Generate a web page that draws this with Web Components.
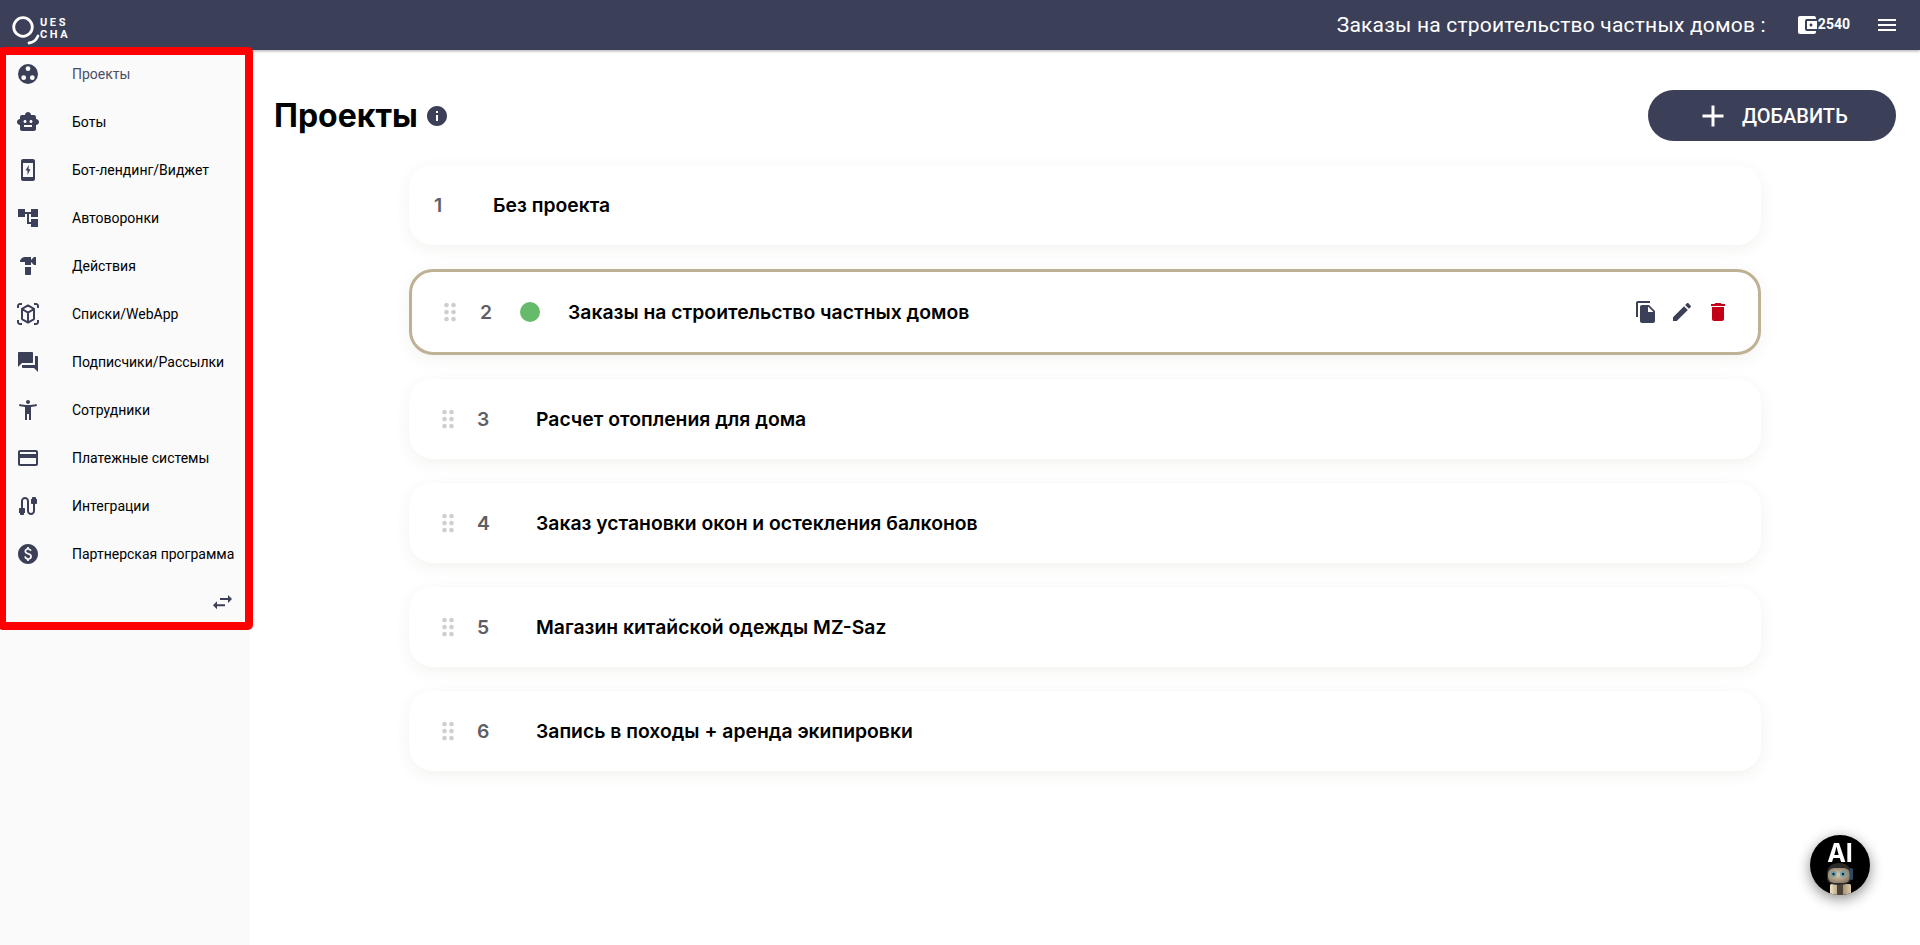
<!DOCTYPE html>
<html lang="ru">
<head>
<meta charset="utf-8">
<title>Проекты</title>
<style>
  html, body { margin: 0; height: 100%; background: #fff; overflow: hidden; }
  body { font-family: "Roboto", "Liberation Sans", sans-serif; color: #000; }
  .layout { display: flex; height: 895px; }
</style>
</head>
<body>
<app-header title="Заказы на строительство частных домов :" balance="2540"></app-header>
<div class="layout">
  <side-nav>
    <nav-item icon="projects" active>Проекты</nav-item>
    <nav-item icon="bot">Боты</nav-item>
    <nav-item icon="phone">Бот-лендинг/Виджет</nav-item>
    <nav-item icon="tree">Автоворонки</nav-item>
    <nav-item icon="hammer">Действия</nav-item>
    <nav-item icon="cube">Списки/WebApp</nav-item>
    <nav-item icon="forum">Подписчики/Рассылки</nav-item>
    <nav-item icon="person">Сотрудники</nav-item>
    <nav-item icon="card">Платежные системы</nav-item>
    <nav-item icon="cable">Интеграции</nav-item>
    <nav-item icon="paid">Партнерская программа</nav-item>
  </side-nav>
  <projects-page>
    <project-card num="1" fixed>Без проекта</project-card>
    <project-card num="2" active>Заказы на строительство частных домов</project-card>
    <project-card num="3">Расчет отопления для дома</project-card>
    <project-card num="4">Заказ установки окон и остекления балконов</project-card>
    <project-card num="5">Магазин китайской одежды MZ-Saz</project-card>
    <project-card num="6">Запись в походы + аренда экипировки</project-card>
  </projects-page>
</div>
<ai-fab></ai-fab>

<script>
const ICONS = {
  projects: '<path fill-rule="evenodd" d="M12 2a10 10 0 1 0 0 20 10 10 0 0 0 0-20zm0 2.300a2.400 2.400 0 1 1 0 4.800 2.400 2.400 0 0 1 0-4.800zM7.700 13.300a2.400 2.400 0 1 1 0 4.800 2.400 2.400 0 0 1 0-4.800zm8.600 0a2.400 2.400 0 1 1 0 4.800 2.400 2.400 0 0 1 0-4.800z"/>',
  bot: '<path d="M20 9V7c0-1.1-.9-2-2-2h-3c0-1.66-1.34-3-3-3S9 3.34 9 5H6c-1.1 0-2 .9-2 2v2c-1.66 0-3 1.34-3 3s1.34 3 3 3v4c0 1.1.9 2 2 2h12c1.1 0 2-.9 2-2v-4c1.66 0 3-1.34 3-3s-1.34-3-3-3zM7.5 11.5c0-.83.67-1.5 1.5-1.5s1.5.67 1.5 1.5S9.83 13 9 13s-1.5-.67-1.5-1.5zM16 17H8v-2h8v2zm-1-4c-.83 0-1.5-.67-1.5-1.5S14.17 10 15 10s1.5.67 1.5 1.5S15.83 13 15 13z"/>',
  phone: '<path d="M17 1.01L7 1c-1.1 0-2 .9-2 2v18c0 1.1.9 2 2 2h10c1.1 0 2-.9 2-2V3c0-1.1-.9-1.99-2-1.99zM17 19H7V5h10v14z"/><path d="M12.8 7 9.5 12.6h2v4.4l3-5.8h-1.9z"/>',
  tree: '<path d="M22 11V3h-7v3H9V3H2v8h7V8h2v10h4v3h7v-8h-7v3h-2V8h2v3z"/>',
  hammer: '<path d="M18 3l-3 3V3H9C6.24 3 4 5.24 4 8h5v3h6V8l3 3h2V3h-2zM9 13v7c0 .55.45 1 1 1h4c.55 0 1-.45 1-1v-7H9z"/>',
  cube: '<path d="M3 4c0-.55.45-1 1-1h2V1H4C2.35 1 1 2.35 1 4v2h2V4zm0 16v-2H1v2c0 1.65 1.35 3 3 3h2v-2H4c-.55 0-1-.45-1-1zM20 1h-2v2h2c.55 0 1 .45 1 1v2h2V4c0-1.65-1.35-3-3-3zm1 19c0 .55-.45 1-1 1h-2v2h2c1.65 0 3-1.35 3-3v-2h-2v2z"/><path fill="none" stroke="currentColor" stroke-width="2" stroke-linejoin="round" d="M12 3.400l6 3.500v10.200l-6 3.500-6-3.500V6.900zM6 7l6 3.600L18 7M12 10.600V20.600"/>',
  forum: '<path d="M21 6h-2v9H6v2c0 .55.45 1 1 1h11l4 4V7c0-.55-.45-1-1-1zm-4 6V3c0-.55-.45-1-1-1H3c-.55 0-1 .45-1 1v14l4-4h10c.55 0 1-.45 1-1z"/>',
  person: '<path d="M20.5 6c-2.61.7-5.67 1-8.5 1s-5.89-.3-8.5-1L3 8c1.86.5 4 .83 6 1v13h2v-6h2v6h2V9c2-.17 4.14-.5 6-1l-.5-2zM12 6c1.1 0 2-.9 2-2s-.9-2-2-2-2 .9-2 2 .9 2 2 2z"/>',
  card: '<path d="M20 4H4c-1.11 0-1.99.89-1.99 2L2 18c0 1.11.89 2 2 2h16c1.11 0 2-.89 2-2V6c0-1.11-.89-2-2-2zm0 14H4v-6h16v6zm0-10H4V6h16v2z"/>',
  cable: '<path d="M20 5V4c0-.55-.45-1-1-1h-2c-.55 0-1 .45-1 1v1h-1v4c0 .55.45 1 1 1h1v7c0 1.1-.9 2-2 2s-2-.9-2-2V7c0-2.21-1.79-4-4-4S5 4.79 5 7v7H4c-.55 0-1 .45-1 1v4h1v1c0 .55.45 1 1 1h2c.55 0 1-.45 1-1v-1h1v-4c0-.55-.45-1-1-1H7V7c0-1.1.9-2 2-2s2 .9 2 2v10c0 2.21 1.79 4 4 4s4-1.79 4-4v-7h1c.55 0 1-.45 1-1V5h-1z"/>',
  paid: '<path d="M12 2C6.48 2 2 6.48 2 12s4.48 10 10 10 10-4.48 10-10S17.52 2 12 2zm.88 15.760V19h-1.750v-1.290c-.74-.18-2.390-.77-3.020-2.960l1.650-.67c.06.22.58 2.090 2.400 2.090.93 0 1.980-.48 1.980-1.610 0-.96-.7-1.460-2.280-2.030-1.100-.39-3.350-1.030-3.350-3.310 0-.1.01-2.400 2.620-2.960V5h1.750v1.240c1.840.32 2.510 1.790 2.660 2.230l-1.580.67c-.11-.35-.59-1.340-1.900-1.340-.7 0-1.810.37-1.810 1.390 0 .95.86 1.310 2.640 1.900 2.400.83 3.010 2.050 3.010 3.450 0 2.630-2.500 3.130-3.020 3.220z"/>',
  swap: '<path d="M10 8h8V5l4 4-4 4v-3h-8zM15 14.250H7v-3l-4 4 4 4v-3h8z"/>',
  copy: '<path d="M16 1H4c-1.100 0-2 .9-2 2v14h2V3h12V1zm-1 4l6 6v10c0 1.100-.9 2-2 2H7.990C6.890 23 6 22.100 6 21l.01-14c0-1.100.89-2 1.990-2h7zm-1 7h5.500L14 6.500V12z"/>',
  edit: '<path d="M3 17.250V21h3.750L17.810 9.940l-3.750-3.750L3 17.250zM20.710 7.040c.39-.39.39-1.020 0-1.410l-2.340-2.340c-.39-.39-1.020-.39-1.410 0l-1.830 1.830 3.750 3.750 1.830-1.830z"/>',
  trash: '<path d="M6 19c0 1.100.9 2 2 2h8c1.100 0 2-.9 2-2V7H6v12zM19 4h-3.500l-1-1h-5l-1 1H5v2h14V4z"/>',
  info: '<path d="M12 2C6.480 2 2 6.480 2 12s4.480 10 10 10 10-4.480 10-10S17.520 2 12 2zm1 15h-2v-6h2v6zm0-8h-2V7h2v2z"/>',
  wallet: '<path d="M21 18v1c0 1.100-.9 2-2 2H5c-1.110 0-2-.9-2-2V5c0-1.100.89-2 2-2h14c1.100 0 2 .9 2 2v1h-9c-1.110 0-2 .9-2 2v8c0 1.100.89 2 2 2h9zm-9-2h10V8H12v8zm4-2.500c-.83 0-1.500-.67-1.500-1.500s.67-1.500 1.500-1.500 1.500.67 1.500 1.500-.67 1.500-1.500 1.500z"/>',
  menu: '<path d="M3 18h18v-2H3v2zm0-5h18v-2H3v2zm0-7v2h18V6H3z"/>',
  plus: '<path d="M19 13h-6v6h-2v-6H5v-2h6V5h2v6h6v2z"/>',
  drag: '<path d="M11 18c0 1.100-.9 2-2 2s-2-.9-2-2 .9-2 2-2 2 .9 2 2zm-2-8c-1.100 0-2 .9-2 2s.9 2 2 2 2-.9 2-2-.9-2-2-2zm0-6c-1.100 0-2 .9-2 2s.9 2 2 2 2-.9 2-2-.9-2-2-2zm6 4c1.100 0 2-.9 2-2s-.9-2-2-2-2 .9-2 2 .9 2 2 2zm0 2c-1.100 0-2 .9-2 2s.9 2 2 2 2-.9 2-2-.9-2-2-2zm0 6c-1.100 0-2 .9-2 2s.9 2 2 2 2-.9 2-2-.9-2-2-2z"/>'
};

class AppIcon extends HTMLElement {
  connectedCallback() {
    const size = this.getAttribute('size') || 24;
    const name = this.getAttribute('name');
    this.attachShadow({ mode: 'open' });
    this.shadowRoot.innerHTML = `
      <style>
        :host { display: inline-flex; flex: none; width: ${size}px; height: ${size}px; color: var(--icon-color, #3c3f58); }
        svg { width: 100%; height: 100%; fill: currentColor; display: block; }
      </style>
      <svg viewBox="0 0 24 24">${ICONS[name] || ''}</svg>`;
  }
}
customElements.define('app-icon', AppIcon);

class AppHeader extends HTMLElement {
  connectedCallback() {
    this.attachShadow({ mode: 'open' });
    this.shadowRoot.innerHTML = `
      <style>
        :host { display: flex; align-items: center; height: 50px; background: #3c3f58; color: #fff;
                position: relative; z-index: 2; box-shadow: 0 1px 3px rgba(0,0,0,.35); --icon-color: #fff; }
        .logo { display: flex; align-items: flex-start; margin-left: 12px; height: 40px; padding-top: 10px; box-sizing: border-box; }
        .logo svg { width: 28px; height: 30px; display: block; flex: none; overflow: visible; }
        .word { font: 700 11px/11.500px "Roboto", sans-serif; letter-spacing: 2.600px; margin: 2px 0 0 0; }
        .title { margin-left: auto; font-size: 21px; letter-spacing: .2px; margin-right: 29px; padding-bottom: 1px; }
        .balance { display: flex; align-items: center; font: 700 14px "Roboto", sans-serif; margin-right: 25px; }
        .balance span { margin-left: -1px; margin-top: -2px; }
        .menu { margin-right: 21px; }
      </style>
      <div class="logo">
        <svg viewBox="0 0 28 30" fill="none" stroke="#fff" stroke-linecap="round">
          <circle cx="11" cy="12" r="9.300" stroke-width="2.800"/>
          <path d="M17 28c3.500-.3 7-2.500 9-7" stroke-width="2.800"/>
        </svg>
        <div class="word">UES<br>CHA</div>
      </div>
      <div class="title">${this.getAttribute('title')}</div>
      <div class="balance"><app-icon name="wallet"></app-icon><span>${this.getAttribute('balance')}</span></div>
      <app-icon class="menu" name="menu"></app-icon>`;
  }
}
customElements.define('app-header', AppHeader);

class SideNav extends HTMLElement {
  constructor() {
    super();
    this.attachShadow({ mode: 'open' });
    this.shadowRoot.innerHTML = `
      <style>
        :host { display: flex; flex-direction: column; flex: none; width: 250px; background: #fafafa; position: relative; }
        .toggle { display: flex; justify-content: flex-end; padding: 12px 16px 0 0; }
        /* red annotation frame lying over the menu */
        .frame { position: absolute; left: -2px; top: -3px; width: 255px; height: 583px; box-sizing: border-box;
                 border: 8px solid #fe0000; border-radius: 5px; pointer-events: none; z-index: 3; }
      </style>
      <slot></slot>
      <div class="toggle"><app-icon name="swap"></app-icon></div>
      <div class="frame"></div>`;
  }
}
customElements.define('side-nav', SideNav);

class NavItem extends HTMLElement {
  constructor() {
    super();
    this.attachShadow({ mode: 'open' });
    this.shadowRoot.innerHTML = `
      <style>
        :host { display: flex; align-items: center; height: 48px; padding-left: 16px; font-size: 14px; color: #000; }
        :host([active]) { color: #4a4d66; }
        .label { margin-left: 32px; }
      </style>
      <app-icon name="${this.getAttribute('icon')}"></app-icon>
      <span class="label"><slot></slot></span>`;
  }
}
customElements.define('nav-item', NavItem);

class AddButton extends HTMLElement {
  constructor() {
    super();
    this.attachShadow({ mode: 'open' });
    this.shadowRoot.innerHTML = `
      <style>
        :host { display: inline-flex; align-items: center; width: 248px; height: 51px; border-radius: 26px; padding-left: 47px;
                background: #3c3f58; color: #fff; font: 500 20px "Roboto", sans-serif; --icon-color: #fff; box-sizing: border-box; }
        span { margin-left: 11px; }
      </style>
      <app-icon name="plus" size="36"></app-icon><span><slot></slot></span>`;
  }
}
customElements.define('add-button', AddButton);

class ProjectsPage extends HTMLElement {
  constructor() {
    super();
    this.attachShadow({ mode: 'open' });
    this.shadowRoot.innerHTML = `
      <style>
        :host { display: block; flex: 1; padding-top: 40px; font-family: "Inter", "Roboto", sans-serif; }
        .head { display: flex; align-items: center; height: 51px; padding: 0 24px; margin-bottom: 24px; }
        h1 { margin: 0; font: 700 32px "Inter", sans-serif; color: #000; }
        .head app-icon { margin-left: 7px; }
        add-button { margin-left: auto; }
        .list { display: flex; flex-direction: column; gap: 24px; width: 1352px; margin: 0 auto; }
      </style>
      <div class="head">
        <h1>Проекты</h1>
        <app-icon name="info"></app-icon>
        <add-button>ДОБАВИТЬ</add-button>
      </div>
      <div class="list"><slot></slot></div>`;
  }
}
customElements.define('projects-page', ProjectsPage);

class ProjectCard extends HTMLElement {
  constructor() {
    super();
    const fixed = this.hasAttribute('fixed');
    const active = this.hasAttribute('active');
    this.attachShadow({ mode: 'open' });
    this.shadowRoot.innerHTML = `
      <style>
        :host { display: flex; align-items: center; height: 80px; background: #fff; border-radius: 24px; padding-left: 25px;
                box-sizing: border-box; box-shadow: 0 4px 16px rgba(90,70,40,.07); font: 600 19.350px "Inter", sans-serif; color: #000; }
        :host([active]) { height: 86px; border: 3px solid #bfb195; padding: 0 28px 0 24px; }
        .handle { --icon-color: #cfcfcf; margin-right: 15px; }
        :host([active]) .handle { margin-right: 16px; }
        .num { width: 59px; flex: none; font-weight: 600; color: #5e5e64; }
        :host([active]) .num { width: 40px; }
        .dot { width: 20px; height: 20px; border-radius: 50%; background: #66bb6a; margin-right: 28px; flex: none; }
        .actions { margin-left: auto; display: flex; gap: 12px; }
        .trash { --icon-color: #c40018; }
      </style>
      ${fixed ? '' : '<app-icon class="handle" name="drag" size="28"></app-icon>'}
      <div class="num">${this.getAttribute('num')}</div>
      ${active ? '<div class="dot"></div>' : ''}
      <div><slot></slot></div>
      ${active ? '<div class="actions"><app-icon name="copy"></app-icon><app-icon name="edit"></app-icon><app-icon class="trash" name="trash"></app-icon></div>' : ''}`;
  }
}
customElements.define('project-card', ProjectCard);

class AiFab extends HTMLElement {
  constructor() {
    super();
    this.attachShadow({ mode: 'open' });
    this.shadowRoot.innerHTML = `
      <style>
        :host { position: fixed; left: 1810px; top: 835px; width: 60px; height: 60px; border-radius: 50%; background: #000; overflow: hidden;
                box-shadow: 0 4px 14px rgba(0,0,0,.45); display: flex; justify-content: center; color: #fff; font: 700 25px/36px "Inter", sans-serif; }
        svg { position: absolute; inset: 0; width: 60px; height: 60px; }
        span { position: relative; margin-top: 0; }
      </style>
      <span>AI</span>
      <svg viewBox="0 0 60 60">
        <defs>
          <radialGradient id="h" cx=".45" cy=".45" r=".7"><stop offset="0" stop-color="#d8c9ab"/><stop offset="1" stop-color="#7a6c59"/></radialGradient>
          <linearGradient id="b" x1="0" x2="1"><stop offset="0" stop-color="#f2e3c6"/><stop offset=".55" stop-color="#9d8a6d"/><stop offset="1" stop-color="#dcc9a9"/></linearGradient>
        </defs>
        <rect x="20" y="49" width="21" height="11" rx="1.500" fill="url(#b)"/>
        <rect x="27" y="50" width="6" height="10" fill="#4d4438"/>
        <path d="M17 38c0-6 5-10 12-10s12 4 12 10v5c0 4-3 7-12 7s-12-3-12-7z" fill="#2c2b2a"/>
        <rect x="18" y="33" width="22" height="15" rx="6" fill="url(#h)"/>
        <circle cx="23.500" cy="39" r="3" fill="#6aa0b3"/><circle cx="33" cy="39" r="3" fill="#6aa0b3"/>
        <circle cx="23.500" cy="39" r="1.200" fill="#12262e"/><circle cx="33" cy="39" r="1.200" fill="#12262e"/>
        <rect x="39.500" y="33" width="3.500" height="12" rx="1.700" fill="#2e4a63"/>
      </svg>`;
  }
}
customElements.define('ai-fab', AiFab);
</script>
</body>
</html>
